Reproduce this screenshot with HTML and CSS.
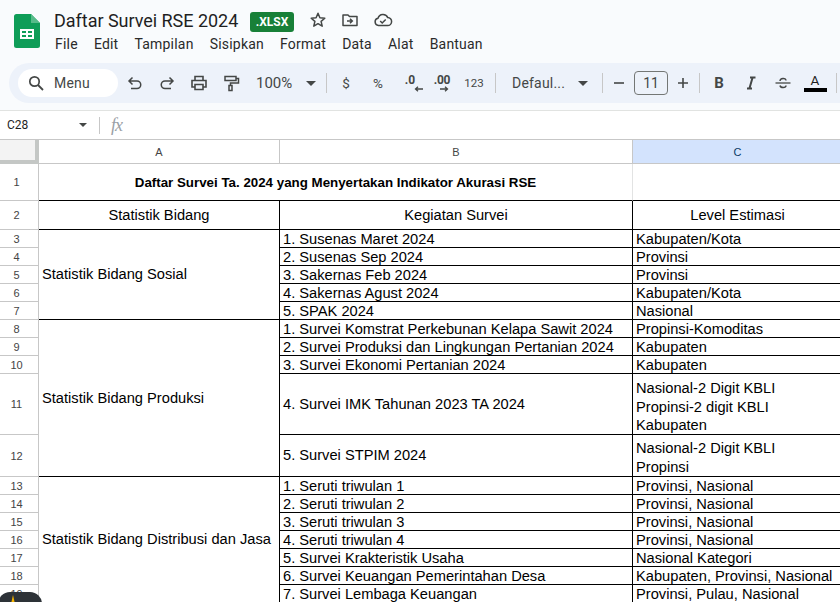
FILE: index.html
```html
<!DOCTYPE html>
<html lang="id">
<head>
<meta charset="utf-8">
<title>Daftar Survei RSE 2024</title>
<link rel="stylesheet" href="styles.css">
</head>
<body>
<header class="top">
  <svg class="logo" width="26" height="34" viewBox="0 0 26 34"><path d="M2.500 0h14.500l9 9v22.500a2.500 2.500 0 0 1-2.500 2.500h-21A2.500 2.500 0 0 1 0 31.500V2.500A2.500 2.500 0 0 1 2.500 0z" fill="#0f9d58"/><path d="M17 0l9 9h-9z" fill="#57bb8a"/><path d="M6 15h14v10h-14zM8 17v2h4v-2zM14 17v2h4v-2zM8 21v2h4v-2zM14 21v2h4v-2z" fill="#fff" fill-rule="evenodd"/></svg>
  <div class="top-text">
    <div class="title-row">
      <span class="doc-title">Daftar Survei RSE 2024</span>
      <span class="badge">.XLSX</span>
      <svg class="ti star" width="18" height="18" viewBox="0 0 18 18"><path d="M9 2.200l1.900 4.600 4.900.4-3.700 3.200 1.100 4.800L9 12.700l-4.200 2.500 1.100-4.800-3.700-3.200 4.900-.4z" fill="none" stroke="#444746" stroke-width="1.500" stroke-linejoin="round"/></svg>
      <svg class="ti" width="18" height="18" viewBox="0 0 18 18"><path d="M2 4h5l1.500 1.500H16v9H2z" fill="none" stroke="#444746" stroke-width="1.500" stroke-linejoin="round"/><path d="M6 10h5M9 7.800l2.300 2.200L9 12.200" fill="none" stroke="#444746" stroke-width="1.500"/></svg>
      <svg class="ti" width="20" height="18" viewBox="0 0 20 18"><path d="M5.500 14.500a3.700 3.700 0 0 1-.5-7.300 5.200 5.200 0 0 1 9.800-.6 3.900 3.900 0 0 1-.3 7.900z" fill="none" stroke="#444746" stroke-width="1.500"/><path d="M7.200 10l2 2 3.500-3.600" fill="none" stroke="#444746" stroke-width="1.500"/></svg>
    </div>
    <nav class="menu">
      <span>File</span><span>Edit</span><span>Tampilan</span><span>Sisipkan</span><span>Format</span><span>Data</span><span>Alat</span><span>Bantuan</span>
    </nav>
  </div>
</header>

<div class="toolbar">
  <div class="search">
    <svg width="18" height="18" viewBox="0 0 18 18"><circle cx="7.500" cy="7.500" r="4.700" fill="none" stroke="#444746" stroke-width="1.700"/><path d="M11 11l5 5" stroke="#444746" stroke-width="1.800"/></svg>
    <span>Menu</span>
  </div>
  <span class="btn first"><svg width="18" height="18" viewBox="0 0 18 18"><path d="M3.500 7h7.500a3.700 3.700 0 0 1 0 7.500H5M6.500 3.500L3 7l3.500 3.500" fill="none" stroke="#444746" stroke-width="1.500"/></svg></span>
  <span class="btn"><svg width="18" height="18" viewBox="0 0 18 18"><path d="M14.500 7H7a3.700 3.700 0 0 0 0 7.500h6M11.500 3.500L15 7l-3.500 3.500" fill="none" stroke="#444746" stroke-width="1.500"/></svg></span>
  <span class="btn"><svg width="18" height="18" viewBox="0 0 18 18"><path d="M5 6V2.500h8V6M5 13H2V6.500h14V13h-3M5 10.500h8v5H5z" fill="none" stroke="#444746" stroke-width="1.600"/></svg></span>
  <span class="btn"><svg width="18" height="18" viewBox="0 0 18 18"><path d="M3 2.500h11v4H3zM14 4.500h2.500V9H8.500v2.500M7 11.500h3v5H7z" fill="none" stroke="#444746" stroke-width="1.500"/></svg></span>
  <span class="drop zoom">100%<i class="caret"></i></span>
  <i class="sep"></i>
  <span class="btn sym">$</span>
  <span class="btn sym">%</span>
  <span class="btn"><span class="dec">.0<svg width="9" height="6" viewBox="0 0 9 6"><path d="M9 3H2M4 .8L1.500 3 4 5.200" fill="none" stroke="#444746" stroke-width="1.300"/></svg></span></span>
  <span class="btn"><span class="dec wide">.00<svg width="9" height="6" viewBox="0 0 9 6"><path d="M0 3h7M5 .8L7.500 3 5 5.200" fill="none" stroke="#444746" stroke-width="1.300"/></svg></span></span>
  <span class="btn num">123</span>
  <i class="sep sep-font"></i>
  <span class="drop font">Defaul...<i class="caret"></i></span>
  <i class="sep sep-size"></i>
  <span class="btn"><svg width="14" height="14" viewBox="0 0 14 14"><path d="M2 7h10" stroke="#444746" stroke-width="1.600"/></svg></span>
  <span class="size">11</span>
  <span class="btn"><svg width="14" height="14" viewBox="0 0 14 14"><path d="M2 7h10M7 2v10" stroke="#444746" stroke-width="1.600"/></svg></span>
  <i class="sep sep-tight"></i>
  <span class="btn fmt bold">B</span>
  <span class="btn"><svg width="14" height="14" viewBox="0 0 14 14"><path d="M3 12.500h5M6 1.500h5.500M8.600 1.500L5.400 12.500" fill="none" stroke="#444746" stroke-width="2"/></svg></span>
  <span class="btn"><svg width="18" height="18" viewBox="0 0 18 18"><path d="M1.500 9h15" stroke="#444746" stroke-width="1.300"/><path d="M6 7c0-3 6-3.500 6-.5M6 11.500c.5 2.700 6 2.700 6 0" fill="none" stroke="#444746" stroke-width="1.400"/></svg></span>
  <span class="btn color"><span class="a">A</span><i class="bar"></i></span>
  <i class="sep sep-last"></i>
</div>

<div class="fbar">
  <span class="ref">C28</span><i class="caret"></i><i class="fsep"></i><span class="fx">fx</span>
</div>

<main class="sheet">
  <div class="corner"></div>
  <div class="col">A</div>
  <div class="col">B</div>
  <div class="col sel">C</div>

  <div class="rn">1</div>
  <div class="title-cell">Daftar Survei Ta. 2024 yang Menyertakan Indikator Akurasi RSE</div>
  <div class="empty"></div>

  <div class="rn">2</div>
  <div class="c hd">Statistik Bidang</div>
  <div class="c hd">Kegiatan Survei</div>
  <div class="c hd">Level Estimasi</div>

  <div class="rn">3</div>
  <div class="c up g1">Statistik Bidang Sosial</div>
  <div class="c">1. Susenas Maret 2024</div><div class="c">Kabupaten/Kota</div>
  <div class="rn">4</div><div class="c">2. Susenas Sep 2024</div><div class="c">Provinsi</div>
  <div class="rn">5</div><div class="c">3. Sakernas Feb 2024</div><div class="c">Provinsi</div>
  <div class="rn">6</div><div class="c">4. Sakernas Agust 2024</div><div class="c">Kabupaten/Kota</div>
  <div class="rn">7</div><div class="c">5. SPAK 2024</div><div class="c">Nasional</div>

  <div class="rn">8</div>
  <div class="c g2">Statistik Bidang Produksi</div>
  <div class="c">1. Survei Komstrat Perkebunan Kelapa Sawit 2024</div><div class="c">Propinsi-Komoditas</div>
  <div class="rn">9</div><div class="c">2. Survei Produksi dan Lingkungan Pertanian 2024</div><div class="c">Kabupaten</div>
  <div class="rn">10</div><div class="c">3. Survei Ekonomi Pertanian 2024</div><div class="c">Kabupaten</div>
  <div class="rn">11</div><div class="c">4. Survei IMK Tahunan 2023 TA 2024</div><div class="c multi">Nasional-2 Digit KBLI<br>Propinsi-2 digit KBLI<br>Kabupaten</div>
  <div class="rn">12</div><div class="c up">5. Survei STPIM 2024</div><div class="c multi two">Nasional-2 Digit KBLI<br>Propinsi</div>

  <div class="rn">13</div>
  <div class="c up g3">Statistik Bidang Distribusi dan Jasa</div>
  <div class="c">1. Seruti triwulan 1</div><div class="c">Provinsi, Nasional</div>
  <div class="rn">14</div><div class="c">2. Seruti triwulan 2</div><div class="c">Provinsi, Nasional</div>
  <div class="rn">15</div><div class="c">3. Seruti triwulan 3</div><div class="c">Provinsi, Nasional</div>
  <div class="rn">16</div><div class="c">4. Seruti triwulan 4</div><div class="c">Provinsi, Nasional</div>
  <div class="rn">17</div><div class="c">5. Survei Krakteristik Usaha</div><div class="c">Nasional Kategori</div>
  <div class="rn">18</div><div class="c">6. Survei Keuangan Pemerintahan Desa</div><div class="c">Kabupaten, Provinsi, Nasional</div>
  <div class="rn">19</div><div class="c">7. Survei Lembaga Keuangan</div><div class="c">Provinsi, Pulau, Nasional</div>
</main>

<div class="float"><svg width="14" height="10" viewBox="0 0 14 10"><path d="M7 1l2 9H5z" fill="#f5b400"/></svg></div>
</body>
</html>
```

FILE: styles.css
```css
* { box-sizing: border-box; }
html, body { margin: 0; padding: 0; }
body {
  width: 840px;
  height: 602px;
  overflow: hidden;
  background: #f9fbfd;
  font-family: "Roboto", "Open Sans", "Liberation Sans", sans-serif;
  color: #1f1f1f;
  position: relative;
}
i { display: block; font-style: normal; }

.top { height: 63px; display: flex; padding: 14px 0 0 14px; }
.logo { width: 26px; height: 34px; flex: none; }
.top-text { margin-left: 14px; margin-top: -4px; }
.title-row { display: flex; align-items: center; height: 22px; margin-top: 1px; }
.doc-title { font-size: 18px; line-height: 20px; color: #1f1f1f; width: 196px; white-space: nowrap; letter-spacing: -.03px; margin-bottom: 2px; }
.badge {
  width: 44px; height: 20px; border-radius: 3px; background: #188038; color: #fff;
  font: 700 12px/20px "Roboto", sans-serif; text-align: center;
}
.ti { margin-left: 14px; flex: none; margin-bottom: 4px; }
.star { margin-left: 15px; }
.menu { display: flex; gap: 16.100px; margin-top: 2px; font-size: 14px; line-height: 18px; letter-spacing: .2px; padding-left: 1px; color: #2a2a2a; }

.toolbar {
  height: 40px; margin-left: 9px; background: #edf2fa;
  border-radius: 20px 0 0 20px; display: flex; align-items: center; padding-left: 9px;
}
.search {
  width: 100px; height: 28px; border-radius: 14px; background: #fff;
  display: flex; align-items: center; gap: 9px; padding-left: 9px;
  font-size: 14px; color: #444746; letter-spacing: .2px; flex: none;
}
.btn { width: 32px; height: 32px; flex: none; display: flex; align-items: center; justify-content: center; color: #444746; }
.btn svg { display: block; }
.btn.first { margin-left: 1px; }
.drop { display: flex; align-items: center; color: #444746; font-size: 15px; flex: none; }
.zoom { width: 71px; padding-left: 9px; }
.zoom .caret { margin-left: 14px; }
.font { width: 90px; padding-left: 8px; font-size: 14px; letter-spacing: .2px; }
.font .caret { margin-left: 13px; }
.caret { width: 0; height: 0; border-left: 5px solid transparent; border-right: 5px solid transparent; border-top: 5px solid #444746; flex: none; }
.sep { width: 1px; height: 20px; background: #c7c7c7; margin: 0 3px 0 8px; flex: none; }
.sep-font { margin: 0 8px 0 5px; }
.sep-size { margin: 0 0 0 8px; }
.sep-tight { margin: 0 3px 0 0; }
.sep-last { margin: 0 0 0 5px; }
.sym { font-size: 13.500px; }
.num { font-size: 11.500px; }
.dec { display: block; position: relative; font-size: 12px; font-weight: 700; line-height: 12px; height: 18px; width: 16px; text-align: center; }
.dec svg { position: absolute; right: -5px; bottom: 0; }
.dec.wide { width: 18px; letter-spacing: -.3px; }
.dec.wide svg { right: 2px; }
.size {
  width: 34px; height: 24px; margin: 0 -1px; border: 1px solid #747775; border-radius: 4px;
  display: flex; align-items: center; justify-content: center; font-size: 14px; color: #444746; flex: none;
}
.fmt { font-family: "Roboto", sans-serif; }
.bold { font-size: 15px; font-weight: 700; }
.color { flex-direction: column; gap: 1px; }
.color .a { font-size: 13.500px; line-height: 13px; color: #1f1f1f; }
.color .bar { width: 23px; height: 4px; background: #000; }

.fbar {
  margin-top: 7px; height: 29px; background: #fff; display: flex; align-items: center;
  border-top: 1px solid #e1e3e1; font-size: 12px; padding-left: 7px; color: #1f1f1f;
}
.ref { width: 72px; font-family: "Roboto", sans-serif; }
.fbar .caret { border-left-width: 4px; border-right-width: 4px; border-top-width: 4px; border-top-color: #444746; }
.fsep { width: 1px; height: 17px; background: #c7c7c7; margin-left: 12px; }
.fx { margin-left: 11px; font: italic 18px "Liberation Serif", serif; color: #9aa0a6; letter-spacing: -1px; }

.sheet {
  display: grid;
  grid-template-columns: 39px 241px 353px 210px;
  grid-template-rows: 24px 37px 29px repeat(8, 18px) 61px 42px repeat(7, 18px);
  width: 843px;
  background: #fff;
  font-family: "Liberation Sans", sans-serif;
  border-top: 1px solid #c7c7c7;
  height: 463px;
  overflow: hidden;
}
.corner { background: #f3f3f3; border-right: 4px solid #c4c7c5; border-bottom: 4px solid #c4c7c5; }
.col {
  background: #fff; border-right: 1px solid #c7c7c7; border-bottom: 1px solid #c7c7c7;
  display: flex; align-items: center; justify-content: center; font-size: 11px; color: #444;
}
.col.sel { background: #d3e3fd; color: #0b3a66; }
.rn {
  background: #fff; border-right: 1px solid #c7c7c7; border-bottom: 1px solid #c7c7c7;
  display: flex; align-items: center; justify-content: center; font-size: 11px; color: #444;
  padding-right: 5px;
}
.title-cell {
  border-right: 1px solid #e2e3e3; border-bottom: 1px solid #000;
  grid-column: span 2;
  display: flex; align-items: center; justify-content: center;
  font-size: 13.330px; font-weight: 700; color: #000;
}
.empty { border-bottom: 1px solid #000; }
.c {
  border-right: 1px solid #000; border-bottom: 1px solid #000;
  font-size: 14.670px; line-height: 18px; color: #000;
  padding: 0 3px; display: flex; flex-direction: column; justify-content: center; align-items: flex-start;
  white-space: nowrap; overflow: hidden;
}
.c.hd { align-items: center; }
.c.up { padding-bottom: 2px; }
.c.multi { display: block; padding-top: 5px; line-height: 18.500px; }
.c.multi.two { padding-top: 4px; }
.g1 { grid-row: span 5; }
.g2 { grid-row: span 5; }
.g3 { grid-row: span 7; }

.float {
  position: absolute; left: -2px; top: 592px; width: 44px; height: 24px;
  background: #2d3237; border-radius: 14px; display: flex; justify-content: center; padding: 2px 14px 0 0;
}
```
